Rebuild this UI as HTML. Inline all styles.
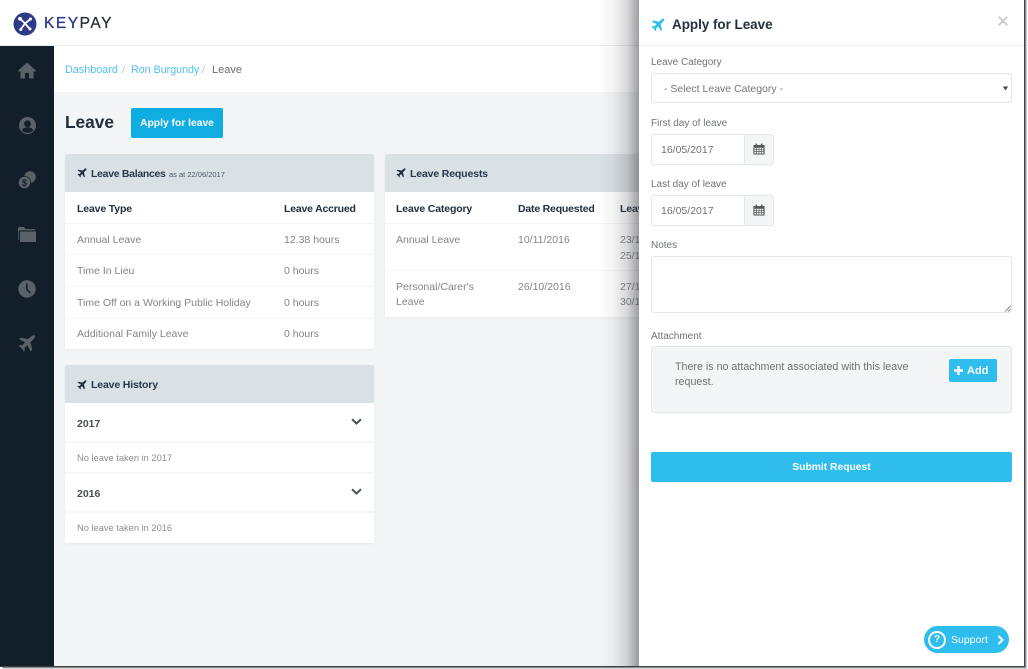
<!DOCTYPE html>
<html>
<head>
<meta charset="utf-8">
<title>Leave</title>
<style>
html,body{margin:0;padding:0;background:#fff}
#p{position:relative;width:1028px;height:669px;overflow:hidden;background:#fff;font-family:"Liberation Sans",sans-serif;color:#828487;font-size:10.500px}
#p div,#p span,#p svg{position:absolute;white-space:nowrap}
.t{line-height:14px}
.h{color:#1f2d3d;font-weight:bold;font-size:10.500px;letter-spacing:-.150px}
.line{height:1px;background:#f3f5f6}
.card{background:#fff;border-radius:2px;box-shadow:0 1px 2px rgba(0,0,0,.05)}
.head{background:#dae1e4;border-radius:2px 2px 0 0;height:38px}
.lab{color:#6f7376;font-size:10px;line-height:14px;left:651px}
.inp{background:#fff;border:1px solid #e2e7e9;border-radius:3px;box-sizing:border-box}
.add{border:1px solid #e2e7e9;background:#f3f5f6;box-sizing:border-box;border-radius:0 3px 3px 0}
.val{font-size:10.500px;line-height:14px;color:#707376}
</style>
</head>
<body>
<div id="p">
<svg width="0" height="0" style="left:0;top:0"><defs>
<symbol id="plane" viewBox="0 0 24 24"><path d="M22.600 1.400c-1.300-.8-3.700-.2-5.300 1.400L13.700 6.400 3.500 4.200 1.400 6.300 9.600 10.500 6 14.400 2.500 14 1 15.500 5 18.200 7.600 22.800 9.100 21.300 8.700 17.900 12.500 14.300 16.800 22.600 18.900 20.500 16.600 10.200 20.300 6.600C21.900 5 23.300 2.400 22.600 1.400Z"/></symbol>
<symbol id="cal" viewBox="0 0 12 12"><path fill="#55595c" fill-rule="evenodd" d="M1 2h1.500V.6h1.600V2h3.800V.6h1.600V2H11a.6.6 0 0 1 .6.6v8.300a.6.6 0 0 1-.6.6H1a.6.6 0 0 1-.6-.6V2.600A.6.6 0 0 1 1 2Zm.4 2.800v1.400h1.800V4.800Zm2.500 0v1.400h1.800V4.800Zm2.400 0v1.400h1.800V4.800Zm2.400 0v1.400h1.700V4.800ZM1.400 6.900v1.400h1.800V6.900Zm2.500 0v1.400h1.800V6.900Zm2.400 0v1.400h1.800V6.900Zm2.400 0v1.400h1.700V6.900ZM1.400 9v1.500h1.800V9Zm2.500 0v1.500h1.800V9Zm2.400 0v1.500h1.800V9Zm2.400 0v1.500h1.700V9Z"/></symbol>
</defs></svg>

<!-- top bar -->
<div style="left:0;top:0;width:1028px;height:45px;background:#fff;border-bottom:1px solid #e9ebec"></div>
<svg style="left:13px;top:12px" width="24" height="24" viewBox="0 0 24 24"><circle cx="12" cy="12" r="11.500" fill="#2e3a87"/><path d="M7.500 7 12 11.500 17 7.500M12 11.500 8 17M12 11.500 16.500 16.500" stroke="#fff" stroke-width="1.900" fill="none" stroke-linecap="round"/><circle cx="7" cy="6.800" r="1.900" fill="#fff"/><circle cx="17.500" cy="7" r="1.500" fill="#fff"/><circle cx="7.800" cy="17.500" r="1.500" fill="#fff"/><circle cx="17" cy="17" r="1.500" fill="#fff"/></svg>
<div style="left:44px;top:15px;font-size:15.500px;line-height:18px;letter-spacing:1.550px;-webkit-text-stroke:.3px currentColor;color:#2b2f38"><span style="position:static;color:#2e3a87">KEY</span><span style="position:static;color:#2b2f38">PAY</span></div>

<!-- sidebar -->
<div style="left:0;top:46px;width:54px;height:620px;background:#121f2a"></div>
<svg style="left:18px;top:62px" width="18" height="17" viewBox="0 0 18 17"><path fill="#5b6267" d="M9 .5 18 8.700 16.800 10 15.500 8.900V16.500H11V11H7V16.500H2.500V8.900L1.200 10 0 8.700Z"/></svg>
<svg style="left:19px;top:117px" width="17" height="17" viewBox="0 0 17 17"><circle cx="8.500" cy="8.500" r="8.500" fill="#5b6267"/><circle cx="8.500" cy="6.800" r="3.400" fill="#121f2a"/><path fill="#121f2a" d="M2.800 13.500C4 10.800 6 10.400 8.500 10.400S13 10.800 14.200 13.500C12.800 15 10.800 15.800 8.500 15.800S4.200 15 2.800 13.500Z"/></svg>
<svg style="left:18px;top:171px" width="18" height="18" viewBox="0 0 18 18"><circle cx="12" cy="6" r="5.800" fill="#5b6267"/><circle cx="6.500" cy="11.500" r="6.500" fill="#121f2a"/><circle cx="6.500" cy="11.500" r="5.800" fill="#5b6267"/><text x="6.500" y="15" font-family="Liberation Sans" font-size="9" font-weight="bold" text-anchor="middle" fill="#121f2a">$</text></svg>
<svg style="left:18px;top:227px" width="18" height="15" viewBox="0 0 18 15"><path fill="#5b6267" d="M0 1.500C0 .7.600 0 1.500 0H6L7.500 2H16C16.800 2 17.500 2.600 17.500 3.400H2.500C1.300 3.400.7 4 .7 5V13H0ZM2 4.500H18V15H2Z"/></svg>
<svg style="left:18px;top:280px" width="18" height="18" viewBox="0 0 18 18"><circle cx="9" cy="9" r="8.700" fill="#5b6267"/><path d="M8.800 3.500V9.500L12.500 13" stroke="#121f2a" stroke-width="1.500" fill="none"/></svg>
<svg style="left:18px;top:334px" width="18" height="19" fill="#5b6267"><use href="#plane" width="18" height="19"/></svg>

<!-- content -->
<div style="left:54px;top:46px;width:585px;height:46px;background:#fff"></div>
<div style="left:54px;top:92px;width:585px;height:574px;background:#f3f5f7"></div>
<div class="t" style="left:65px;top:63px;color:#4fc0ef;font-size:10.800px">Dashboard</div>
<div class="t" style="left:122px;top:63px;color:#b6babd">/</div>
<div class="t" style="left:131px;top:63px;color:#4fc0ef;font-size:10.700px">Ron Burgundy</div>
<div class="t" style="left:202px;top:63px;color:#b6babd">/</div>
<div class="t" style="left:212px;top:63px;color:#6b6f72;font-size:11px">Leave</div>
<div style="left:65px;top:111px;font-size:17.300px;line-height:22px;font-weight:bold;color:#1f2d3d">Leave</div>
<div style="left:131px;top:108px;width:92px;height:30px;background:#0fade2;border-radius:2px;color:#fff;font-size:10.300px;font-weight:bold;line-height:32px;text-align:center">Apply for leave</div>

<!-- balances -->
<div class="card" style="left:65px;top:154px;width:309px;height:195px"></div>
<div class="head" style="left:65px;top:154px;width:309px"></div>
<svg style="left:77px;top:168px" width="10" height="10" fill="#1f2d3d"><use href="#plane" width="10" height="10"/></svg>
<div class="t h" style="left:91px;top:167px;color:#25374a;letter-spacing:-.300px">Leave Balances</div>
<div class="t" style="left:169px;top:168px;font-size:7.500px;color:#4a5866">as at 22/06/2017</div>
<div class="t h" style="left:77px;top:202px">Leave Type</div>
<div class="t h" style="left:284px;top:202px;letter-spacing:-.200px">Leave Accrued</div>
<div class="line" style="left:65px;top:223px;width:309px"></div>
<div class="line" style="left:65px;top:254px;width:309px"></div>
<div class="line" style="left:65px;top:286px;width:309px"></div>
<div class="line" style="left:65px;top:318px;width:309px"></div>
<div class="t" style="left:77px;top:233px">Annual Leave</div><div class="t" style="left:284px;top:233px">12.38 hours</div>
<div class="t" style="left:77px;top:264px">Time In Lieu</div><div class="t" style="left:284px;top:264px">0 hours</div>
<div class="t" style="left:77px;top:296px">Time Off on a Working Public Holiday</div><div class="t" style="left:284px;top:296px">0 hours</div>
<div class="t" style="left:77px;top:327px">Additional Family Leave</div><div class="t" style="left:284px;top:327px">0 hours</div>

<!-- requests -->
<div class="card" style="left:385px;top:154px;width:260px;height:163px"></div>
<div class="head" style="left:385px;top:154px;width:260px"></div>
<svg style="left:396px;top:168px" width="10" height="10" fill="#1f2d3d"><use href="#plane" width="10" height="10"/></svg>
<div class="t h" style="left:410px;top:167px;color:#25374a">Leave Requests</div>
<div class="t h" style="left:396px;top:202px">Leave Category</div>
<div class="t h" style="left:518px;top:202px;letter-spacing:-.200px">Date Requested</div>
<div class="t h" style="left:620px;top:202px">Leave</div>
<div class="line" style="left:385px;top:223px;width:260px"></div>
<div class="line" style="left:385px;top:270px;width:260px"></div>
<div class="t" style="left:396px;top:233px">Annual Leave</div>
<div class="t" style="left:518px;top:233px">10/11/2016</div>
<div class="t" style="left:620px;top:233px">23/11</div>
<div class="t" style="left:620px;top:249px">25/11</div>
<div class="t" style="left:396px;top:280px">Personal/Carer's</div>
<div class="t" style="left:396px;top:295px">Leave</div>
<div class="t" style="left:518px;top:280px">26/10/2016</div>
<div class="t" style="left:620px;top:280px">27/11</div>
<div class="t" style="left:620px;top:295px">30/11</div>

<!-- history -->
<div class="card" style="left:65px;top:365px;width:309px;height:178px"></div>
<div class="head" style="left:65px;top:365px;width:309px;height:38px"></div>
<svg style="left:77px;top:380px" width="10" height="10" fill="#1f2d3d"><use href="#plane" width="10" height="10"/></svg>
<div class="t h" style="left:91px;top:378px;color:#25374a">Leave History</div>
<div class="t" style="left:77px;top:417px;font-weight:bold;color:#4a4f54">2017</div>
<svg style="left:351px;top:418px" width="11" height="8" viewBox="0 0 11 8"><path d="M1 1.200 5.500 5.500 10 1.200" stroke="#4a5057" stroke-width="2" fill="none"/></svg>
<div class="line" style="left:65px;top:441px;width:309px;height:2px;background:#f6f7f8"></div>
<div class="t" style="left:77px;top:451px;font-size:9.300px;color:#8b8e90">No leave taken in 2017</div>
<div class="line" style="left:65px;top:472px;width:309px;height:2px;background:#f6f7f8"></div>
<div class="t" style="left:77px;top:487px;font-weight:bold;color:#4a4f54">2016</div>
<svg style="left:351px;top:488px" width="11" height="8" viewBox="0 0 11 8"><path d="M1 1.200 5.500 5.500 10 1.200" stroke="#4a5057" stroke-width="2" fill="none"/></svg>
<div class="line" style="left:65px;top:511px;width:309px;height:2px;background:#f6f7f8"></div>
<div class="t" style="left:77px;top:521px;font-size:9.300px;color:#8b8e90">No leave taken in 2016</div>

<!-- panel shadow -->
<div style="left:599px;top:0;width:40px;height:666px;background:linear-gradient(to right,rgba(60,62,66,0),rgba(60,62,66,.06) 35%,rgba(60,62,66,.2) 70%,rgba(60,62,66,.5))"></div>

<!-- panel -->
<div style="left:639px;top:0;width:385px;height:666px;background:#fff"></div>
<div style="left:639px;top:45px;width:385px;height:1px;background:#eef0f1"></div>
<svg style="left:651px;top:18px" width="14" height="14" fill="#2fbdee"><use href="#plane" width="14" height="14"/></svg>
<div style="left:672px;top:16px;font-size:13.500px;line-height:17px;font-weight:bold;color:#22303e;letter-spacing:-.050px">Apply for Leave</div>
<svg style="left:998px;top:16px" width="10" height="10" viewBox="0 0 10 10"><path d="M.7.700 9.300 9.300M9.300.700.700 9.300" stroke="#c6c9cb" stroke-width="1.800"/></svg>

<div class="lab" style="top:56px">Leave Category</div>
<div class="inp" style="left:651px;top:73px;width:361px;height:30px"></div>
<div class="val" style="left:664px;top:82px;color:#74777a">- Select Leave Category -</div>
<svg style="left:1003px;top:86px" width="5" height="5" viewBox="0 0 5 5"><path d="M0 .5H5L2.500 4.500Z" fill="#444"/></svg>

<div class="lab" style="top:117px">First day of leave</div>
<div class="inp" style="left:651px;top:134px;width:123px;height:31px"></div>
<div class="add" style="left:744px;top:134px;width:30px;height:31px"></div>
<div class="val" style="left:661px;top:143px">16/05/2017</div>
<svg style="left:753px;top:143px" width="12" height="12"><use href="#cal"/></svg>

<div class="lab" style="top:178px">Last day of leave</div>
<div class="inp" style="left:651px;top:195px;width:123px;height:31px"></div>
<div class="add" style="left:744px;top:195px;width:30px;height:31px"></div>
<div class="val" style="left:661px;top:204px">16/05/2017</div>
<svg style="left:753px;top:204px" width="12" height="12"><use href="#cal"/></svg>

<div class="lab" style="top:239px">Notes</div>
<div class="inp" style="left:651px;top:256px;width:361px;height:57px"></div>
<svg style="left:1004px;top:305px" width="7" height="7" viewBox="0 0 7 7"><path d="M1 6.500 6.500 1M4 6.500 6.500 4" stroke="#666" stroke-width=".8"/></svg>

<div class="lab" style="top:330px">Attachment</div>
<div class="inp" style="left:651px;top:346px;width:361px;height:67px;background:#f3f5f7"></div>
<div style="left:675px;top:360px;font-size:10.700px;line-height:15px;color:#707376">There is no attachment associated with this leave</div>
<div style="left:675px;top:375px;font-size:10.700px;line-height:15px;color:#707376">request.</div>
<div style="left:949px;top:359px;width:48px;height:23px;background:#2fbdee;border-radius:2px"></div>
<svg style="left:954px;top:366px" width="9" height="9" viewBox="0 0 9 9"><path d="M4.500 0V9M0 4.500H9" stroke="#fff" stroke-width="2.400"/></svg>
<div style="left:967px;top:364px;font-size:11px;line-height:14px;font-weight:bold;color:#fff">Add</div>

<div style="left:651px;top:452px;width:361px;height:30px;background:#2fbdee;border-radius:2px;color:#fff;font-size:10.300px;font-weight:bold;line-height:32px;text-align:center">Submit Request</div>

<div style="left:924px;top:626px;width:85px;height:27px;background:#2fbdee;border-radius:14px"></div>
<div style="left:928px;top:631px;width:14px;height:14px;border:2px solid #fff;border-radius:50%;color:#fff;font-size:10px;font-weight:bold;line-height:14px;text-align:center">?</div>
<div style="left:951px;top:633px;font-size:10.500px;line-height:14px;color:#fff">Support</div>
<svg style="left:997px;top:635px" width="7" height="10" viewBox="0 0 7 10"><path d="M1.500 1 5.500 5 1.500 9" stroke="#fff" stroke-width="2" fill="none"/></svg>

<!-- screenshot frame shadow -->
<div style="left:1024px;top:0;width:1px;height:667px;background:#3d4142"></div>
<div style="left:1025px;top:0;width:1px;height:668px;background:#8b8e8f"></div>
<div style="left:1026px;top:0;width:1px;height:669px;background:#d0d1d2"></div>
<div style="left:0;top:666px;width:1025px;height:1px;background:#3d4142"></div>
<div style="left:2px;top:667px;width:1024px;height:1px;background:#8b8e8f"></div>
<div style="left:3px;top:668px;width:1024px;height:1px;background:#d0d1d2"></div>
</div>
</body>
</html>
